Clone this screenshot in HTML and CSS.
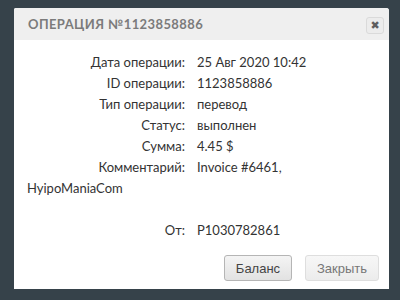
FILE: index.html
```html
<!DOCTYPE html>
<html>
<head>
<meta charset="utf-8">
<link rel="stylesheet" href="styles.css">
</head>
<body>
<div class="dialog">
  <div class="titlebar">
    <span class="title">Операция №1123858886</span>
    <span class="close">✖</span>
  </div>
  <div class="content">
    <div class="row"><span class="label">Дата операции:</span><span class="value">25 Авг 2020 10:42</span></div>
    <div class="row"><span class="label">ID операции:</span><span class="value">1123858886</span></div>
    <div class="row"><span class="label">Тип операции:</span><span class="value">перевод</span></div>
    <div class="row"><span class="label">Статус:</span><span class="value">выполнен</span></div>
    <div class="row"><span class="label">Сумма:</span><span class="value">4.45 $</span></div>
    <div class="row"><span class="label">Комментарий:</span><span class="value">Invoice #6461,</span></div>
    <div class="wrap">HyipoManiaCom</div>
    <div class="blank"></div>
    <div class="row"><span class="label">От:</span><span class="value">P1030782861</span></div>
  </div>
  <div class="footer">
    <button class="btn btn-main">Баланс</button>
    <button class="btn btn-close">Закрыть</button>
  </div>
</div>
</body>
</html>
```
FILE: styles.css
```css
html, body {
  margin: 0;
  padding: 0;
  width: 400px;
  height: 300px;
  background: #36424a;
  overflow: hidden;
}
.dialog {
  margin: 8px 0 0 14px;
  width: 375px;
  height: 281px;
  background: #fff;
  border-radius: 2px 3px 0 0;
  display: flex;
  flex-direction: column;
  font-family: Lato, "Noto Sans", sans-serif;
}
.titlebar {
  height: 32px;
  background: #efefef;
  display: flex;
  align-items: center;
  justify-content: space-between;
  padding: 0 5px 0 14px;
  border-radius: 2px 3px 0 0;
}
.title {
  text-transform: uppercase;
  font-size: 13px;
  font-weight: bold;
  letter-spacing: 0.4px;
  color: #7b7b7b;
}
.close {
  width: 16px;
  height: 15px;
  border: 1px solid #dadada;
  border-radius: 3px;
  background: #ececec;
  color: #5e5e5e;
  font-size: 11px;
  line-height: 15px;
  text-align: center;
  font-family: "DejaVu Sans", sans-serif;
  margin-top: 2px;
}
.content {
  flex: 1;
  padding-top: 12px;
  font-size: 13px;
  line-height: 21px;
  color: #333;
}
.row {
  display: grid;
  grid-template-columns: 171px auto;
  column-gap: 12px;
}
.label {
  text-align: right;
}
.wrap {
  padding-left: 13px;
}
.blank {
  height: 21px;
}
.footer {
  display: flex;
  justify-content: flex-end;
  gap: 13px;
  padding: 0 10px 8px 0;
}
.btn {
  height: 26px;
  border-radius: 3px;
  font-family: "Liberation Sans", Arial, sans-serif;
  font-size: 13px;
  padding: 0;
}
.btn-main {
  width: 68px;
  border: 1px solid #b5b5b5;
  background: linear-gradient(#f4f4f4, #e2e2e2);
  color: #444;
}
.btn-close {
  width: 74px;
  border: 1px solid #dedede;
  background: linear-gradient(#f7f7f7, #ececec);
  color: #777;
}
```
